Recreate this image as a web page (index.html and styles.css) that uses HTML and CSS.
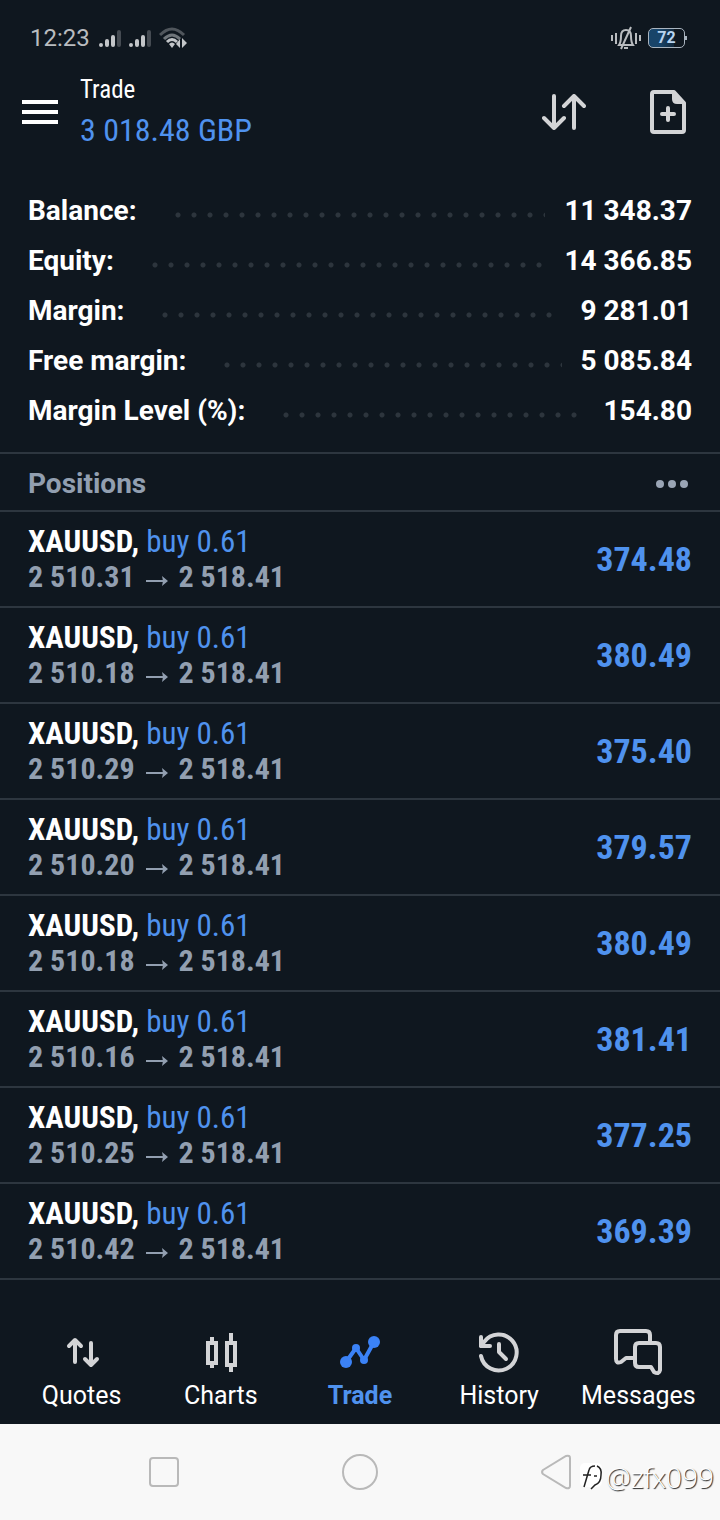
FILE: index.html
```html
<!DOCTYPE html>
<html lang="en">
  <head>
    <meta charset="UTF-8" />
    <meta name="viewport" content="width=device-width, initial-scale=1" />
    <title>Trade</title>
    <link rel="stylesheet" href="styles.css">
  </head>
  <body>
    <div class="status-bar">
      <div class="status-group">
        <span class="clock">12:23</span>
        <svg class="signal" width="23" height="20" viewBox="0 0 23 20">
          <g fill="none" stroke="#c3c6c9" stroke-width="4" stroke-linecap="round">
            <path d="M2 17v0M8 13v4M14 9v8" />
            <path d="M20 4v13" stroke="#454b52" />
          </g>
        </svg>
        <svg class="signal" width="23" height="20" viewBox="0 0 23 20">
          <g fill="none" stroke="#c3c6c9" stroke-width="4" stroke-linecap="round">
            <path d="M2 17v0M8 13v4M14 9v8" />
            <path d="M20 4v13" stroke="#454b52" />
          </g>
        </svg>
        <svg class="wifi" width="30" height="24" viewBox="0 0 30 24">
          <g fill="none" stroke-width="3">
            <path d="M1 9Q13 -3 25 9" stroke="#50565c" />
            <path d="M5 13Q13 5 21 13" stroke="#6f757a" />
            <path d="M8 16Q13 11 18 16" stroke="#c3c6c9" />
          </g>
          <path d="M10 18q3-3 6 0l-3 4zM21 13v9l-4-4zM23 12v10l5-5z" fill="#c3c6c9" />
        </svg>
      </div>
      <div class="status-group">
        <svg class="mute" width="30" height="24" viewBox="0 0 30 24">
          <g fill="none" stroke="#b9bcbf" stroke-width="2">
            <path d="M1 9v6M5 7v11M25 7v11M29 9v6" />
            <path d="M8 19h14q-2-3-2-9 0-6-5-6t-5 6q0 6-2 9zM13 22h4M20 1L10 23" />
          </g>
        </svg>
        <span class="battery">72</span>
      </div>
    </div>

    <header class="header">
      <button class="icon-button menu" aria-label="Menu">
        <svg width="36" height="24" viewBox="0 0 36 24">
          <path d="M0 2h36M0 12h36M0 22h36" stroke="#fff" stroke-width="4" />
        </svg>
      </button>
      <div class="header-title">
        <h1>Trade</h1>
        <p>3 018.48 GBP</p>
      </div>
      <div class="header-actions">
        <button class="icon-button" aria-label="Sort">
          <svg width="44" height="36" viewBox="0 0 44 36">
            <path d="M12 2v32M2 24l10 10 10-10M32 34V2M22 12L32 2l10 10" fill="none" stroke="#d3d4d6" stroke-width="4" stroke-linecap="round" stroke-linejoin="round" />
          </svg>
        </button>
        <button class="icon-button" aria-label="New order">
          <svg width="36" height="44" viewBox="0 0 36 44">
            <path d="M4 2h20l10 11v27q0 2-2 2H4q-2 0-2-2V4q0-2 2-2z" fill="none" stroke="#d3d4d6" stroke-width="4" stroke-linejoin="round" />
            <path d="M22 2v7q0 5 5 5h7L24 2z" fill="#d3d4d6" />
            <path d="M18 18v12M12 24h12" stroke="#d3d4d6" stroke-width="4" stroke-linecap="round" />
          </svg>
        </button>
      </div>
    </header>

    <main>
      <dl class="summary">
        <div class="summary-row"><dt>Balance:</dt><dd>11 348.37</dd></div>
        <div class="summary-row"><dt>Equity:</dt><dd>14 366.85</dd></div>
        <div class="summary-row"><dt>Margin:</dt><dd>9 281.01</dd></div>
        <div class="summary-row"><dt>Free margin:</dt><dd>5 085.84</dd></div>
        <div class="summary-row"><dt>Margin Level (%):</dt><dd>154.80</dd></div>
      </dl>

      <div class="section-head">
        <h2>Positions</h2>
        <button class="icon-button" aria-label="More">
          <svg width="32" height="8" viewBox="0 0 32 8" fill="#9aa5b5">
            <circle cx="4" cy="4" r="4" />
            <circle cx="16" cy="4" r="4" />
            <circle cx="28" cy="4" r="4" />
          </svg>
        </button>
      </div>

      <svg class="defs" width="0" height="0">
        <symbol id="arrow" viewBox="0 0 22 12">
          <path d="M0 6h20" stroke="#929fb0" stroke-width="2" />
          <path d="M16 1l6 5-6 5 1-5z" fill="#929fb0" />
        </symbol>
      </svg>

      <ul class="positions">
        <li class="position">
          <div>
            <p class="symbol">XAUUSD, <span>buy 0.61</span></p>
            <p class="prices">2 510.31 <svg class="arrow"><use href="#arrow" /></svg> 2 518.41</p>
          </div>
          <span class="profit">374.48</span>
        </li>
        <li class="position">
          <div>
            <p class="symbol">XAUUSD, <span>buy 0.61</span></p>
            <p class="prices">2 510.18 <svg class="arrow"><use href="#arrow" /></svg> 2 518.41</p>
          </div>
          <span class="profit">380.49</span>
        </li>
        <li class="position">
          <div>
            <p class="symbol">XAUUSD, <span>buy 0.61</span></p>
            <p class="prices">2 510.29 <svg class="arrow"><use href="#arrow" /></svg> 2 518.41</p>
          </div>
          <span class="profit">375.40</span>
        </li>
        <li class="position">
          <div>
            <p class="symbol">XAUUSD, <span>buy 0.61</span></p>
            <p class="prices">2 510.20 <svg class="arrow"><use href="#arrow" /></svg> 2 518.41</p>
          </div>
          <span class="profit">379.57</span>
        </li>
        <li class="position">
          <div>
            <p class="symbol">XAUUSD, <span>buy 0.61</span></p>
            <p class="prices">2 510.18 <svg class="arrow"><use href="#arrow" /></svg> 2 518.41</p>
          </div>
          <span class="profit">380.49</span>
        </li>
        <li class="position">
          <div>
            <p class="symbol">XAUUSD, <span>buy 0.61</span></p>
            <p class="prices">2 510.16 <svg class="arrow"><use href="#arrow" /></svg> 2 518.41</p>
          </div>
          <span class="profit">381.41</span>
        </li>
        <li class="position">
          <div>
            <p class="symbol">XAUUSD, <span>buy 0.61</span></p>
            <p class="prices">2 510.25 <svg class="arrow"><use href="#arrow" /></svg> 2 518.41</p>
          </div>
          <span class="profit">377.25</span>
        </li>
        <li class="position">
          <div>
            <p class="symbol">XAUUSD, <span>buy 0.61</span></p>
            <p class="prices">2 510.42 <svg class="arrow"><use href="#arrow" /></svg> 2 518.41</p>
          </div>
          <span class="profit">369.39</span>
        </li>
      </ul>
    </main>

    <nav class="tabs">
      <a class="tab" href="#quotes">
        <svg width="48" height="48" viewBox="0 0 48 48">
          <path d="M17 34V13M11 18l6-6 6 6M33 15v21M27 31l6 6 6-6" fill="none" stroke="#d3d4d6" stroke-width="4" stroke-linecap="round" stroke-linejoin="round" />
        </svg>
        Quotes
      </a>
      <a class="tab" href="#charts">
        <svg width="48" height="48" viewBox="0 0 48 48">
          <g fill="none" stroke="#d3d4d6" stroke-width="4">
            <path d="M11 15h8v20h-8zM30 15h8v22h-8z" />
            <path d="M15 9v6M15 35v5M34 5v10M34 37v7" />
          </g>
        </svg>
        Charts
      </a>
      <a class="tab active" href="#trade">
        <svg width="48" height="48" viewBox="0 0 48 48" fill="#3b82f6">
          <path d="M10 34L20 20l8 12 10-18" fill="none" stroke="#3b82f6" stroke-width="4" stroke-linejoin="round" />
          <circle cx="10" cy="34" r="6" />
          <circle cx="20" cy="20" r="4" />
          <circle cx="28" cy="32" r="4" />
          <circle cx="38" cy="14" r="6" />
        </svg>
        Trade
      </a>
      <a class="tab" href="#history">
        <svg width="48" height="48" viewBox="0 0 48 48">
          <g fill="none" stroke="#d3d4d6" stroke-width="4" stroke-linecap="round" stroke-linejoin="round">
            <path d="M6 28a18 18 0 1 0 3-14L6 18" />
            <path d="M6 9v9h9" />
            <path d="M24 16v8l7 7" />
          </g>
        </svg>
        History
      </a>
      <a class="tab" href="#messages">
        <svg width="48" height="48" viewBox="0 0 48 48">
          <g fill="none" stroke="#d3d4d6" stroke-width="4" stroke-linejoin="round">
            <path d="M20 30h-8l-5 4q-5 2-5-3V7q0-4 4-4h26q4 0 4 4v8" />
            <path d="M25 15h17q4 0 4 4v23q-1 5-6 2l-3-5H25q-4 0-4-4V19q0-4 4-4z" />
          </g>
        </svg>
        Messages
      </a>
    </nav>

    <footer class="system-bar">
      <button class="icon-button" aria-label="Recent apps">
        <svg width="30" height="30" viewBox="0 0 30 30">
          <rect x="1" y="1" width="28" height="28" rx="3" fill="none" stroke="#b9b9b9" stroke-width="2" />
        </svg>
      </button>
      <button class="icon-button" aria-label="Home">
        <svg width="36" height="36" viewBox="0 0 36 36">
          <circle cx="18" cy="18" r="17" fill="none" stroke="#b9b9b9" stroke-width="2" />
        </svg>
      </button>
      <button class="icon-button" aria-label="Back">
        <svg width="30" height="36" viewBox="0 0 30 36">
          <path d="M2 16L25 2q4-1 4 2v28q0 3-4 2L2 20q-2-2 0-4z" fill="none" stroke="#b9b9b9" stroke-width="2" />
        </svg>
      </button>
      <div class="watermark">
        <svg width="24" height="28" viewBox="0 0 24 28">
          <rect width="22" height="24" rx="5" fill="#fff" />
          <path d="M4 24L9 7q1-4 6-4M3 12h8M17 3q5 2 4 9 0 8-6 10l-4 4M14 13h3" fill="none" stroke="#222" stroke-width="1.5" />
        </svg>
        @zfx099
      </div>
    </footer>
  </body>
</html>
```
FILE: styles.css
```css
* {
  box-sizing: border-box;
  margin: 0;
  padding: 0;
}

body {
  display: flex;
  flex-direction: column;
  min-height: 100vh;
  background: #0f171f;
  color: #fff;
  font-family: Roboto, sans-serif;
}

svg {
  display: block;
}

.defs {
  position: absolute;
}

.icon-button {
  background: none;
  border: none;
  cursor: pointer;
}

/* status bar */
.status-bar {
  display: flex;
  justify-content: space-between;
  align-items: center;
  height: 76px;
  padding: 0 35px 0 30px;
}

.status-group {
  display: flex;
  align-items: center;
  gap: 7px;
  color: #b9bcbf;
}

.clock {
  margin-right: 2px;
  font-size: 24px;
}

.battery {
  position: relative;
  width: 37px;
  height: 20px;
  border: 1px solid #a9b4bf;
  border-radius: 5px;
  background: linear-gradient(to right, #184469 30%, #12283b 72%, transparent 72%);
  color: #b8d4f0;
  font-size: 16px;
  font-weight: bold;
  line-height: 18px;
  text-align: center;
}

.battery::after {
  content: "";
  position: absolute;
  top: 7px;
  right: -3px;
  width: 2px;
  height: 4px;
  background: #a9b4bf;
}

/* header */
.header {
  display: flex;
  align-items: center;
  height: 72px;
  padding: 0 34px 0 22px;
}

.header-title {
  flex: 1;
  margin-left: 22px;
  font-family: "Roboto Condensed", "Liberation Sans Narrow", Roboto, sans-serif;
}

.header-title h1 {
  font-size: 25px;
  font-weight: normal;
  line-height: 36px;
}

.header-title p {
  color: #4f92ee;
  font-size: 32px;
  line-height: 44px;
}

.header-actions {
  display: flex;
  align-items: center;
  gap: 64px;
}

/* account summary */
.summary {
  padding: 37px 28px 17px;
}

.summary-row {
  display: flex;
  align-items: center;
  height: 50px;
  font-size: 28px;
  font-weight: bold;
}

.summary-row dt {
  display: flex;
  flex: 1;
  align-items: center;
}

/* dotted leader */
.summary-row dt::after {
  content: "";
  flex: 1;
  height: 6px;
  margin: 9px 19px 0 38px;
  background: radial-gradient(circle at 3px 3px, #2d353d 2px, transparent 3px) 0 0 / 16px 6px;
}

/* positions */
.section-head {
  display: flex;
  justify-content: space-between;
  align-items: center;
  height: 60px;
  padding: 4px 32px 0 28px;
  border-top: 2px solid #2d363f;
  border-bottom: 2px solid #2d363f;
}

.section-head h2 {
  color: #929fb0;
  font-size: 28px;
  line-height: 32px;
}

.positions {
  list-style: none;
}

.position {
  display: flex;
  justify-content: space-between;
  align-items: center;
  height: 96px;
  padding: 0 28px;
  border-bottom: 2px solid #2d363f;
  font-family: "Roboto Condensed", "Liberation Sans Narrow", Roboto, sans-serif;
  font-weight: bold;
}

.symbol,
.prices {
  font-size: 30px;
  line-height: 35px;
}

.symbol {
  font-size: 31px;
}

.symbol span {
  color: #4f92ee;
  font-weight: normal;
}

.prices {
  color: #929fb0;
}

.arrow {
  display: inline-block;
  width: 22px;
  height: 12px;
  margin: 0 4px;
}

.profit {
  color: #4f92ee;
  font-size: 34px;
}

/* bottom tabs */
.tabs {
  display: grid;
  grid-template-columns: repeat(5, 1fr);
  margin-top: auto;
  padding: 48px 12px 12px;
}

.tab {
  display: flex;
  flex-direction: column;
  align-items: center;
  gap: 4px;
  color: #fff;
  font-size: 25px;
  line-height: 32px;
  text-decoration: none;
}

.tab.active {
  color: #4f92ee;
  font-weight: bold;
}

/* system navigation */
.system-bar {
  position: relative;
  display: grid;
  grid-template-columns: repeat(3, 1fr);
  place-items: center;
  height: 96px;
  padding: 0 66px;
  background: #f8f8f8;
}

.watermark {
  position: absolute;
  right: 6px;
  bottom: 26px;
  display: flex;
  align-items: center;
  gap: 2px;
  color: #fff;
  font-family: "Open Sans", sans-serif;
  font-size: 28px;
  font-weight: 300;
  line-height: 34px;
  text-shadow: 1px 1px 1px #222;
}
```
